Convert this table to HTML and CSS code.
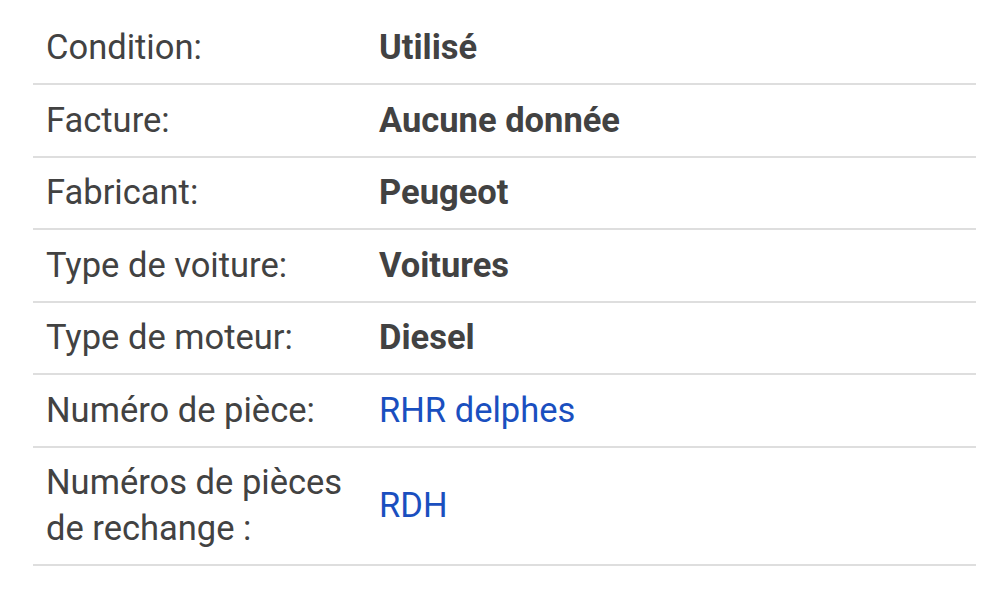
FILE: index.html
```html
<!DOCTYPE html>
<html lang="fr">

<head>
  <meta charset="UTF-8" />
  <meta name="viewport" content="width=device-width, initial-scale=1" />
  <title>Détails de la pièce</title>
  <link rel="stylesheet" href="styles.css">
</head>

<body>
  <table class="specs">
    <colgroup>
      <col class="col-label">
      <col>
    </colgroup>
    <tr>
      <td class="label">Condition:</td>
      <td class="value">Utilisé</td>
    </tr>
    <tr>
      <td class="label">Facture:</td>
      <td class="value">Aucune donnée</td>
    </tr>
    <tr>
      <td class="label">Fabricant:</td>
      <td class="value">Peugeot</td>
    </tr>
    <tr>
      <td class="label">Type de voiture:</td>
      <td class="value">Voitures</td>
    </tr>
    <tr>
      <td class="label">Type de moteur:</td>
      <td class="value">Diesel</td>
    </tr>
    <tr>
      <td class="label">Numéro de pièce:</td>
      <td class="value"><a class="link" href="#">RHR delphes</a></td>
    </tr>
    <tr>
      <td class="label">Numéros de pièces de rechange :</td>
      <td class="value"><a class="link" href="#">RDH</a></td>
    </tr>
  </table>
</body>

</html>
```

FILE: styles.css
```css
* {
  box-sizing: border-box;
  margin: 0;
  padding: 0;
}

body {
  background: #fff;
  color: #424242;
  font-family: Roboto, 'Noto Sans', sans-serif;
  font-size: 34.5px;
  line-height: 45.5px;
  padding: 12.5px 28px 0 33px;
}

.specs {
  width: 100%;
  border-collapse: collapse;
  table-layout: fixed;
}

.col-label {
  width: 333px;
}

.specs td {
  border-bottom: 2px solid #dedede;
  padding: 12.5px 13px;
  vertical-align: middle;
}

.value {
  font-weight: bold;
}

.link {
  color: #1a4fbf;
  font-weight: normal;
  text-decoration: none;
}
```
